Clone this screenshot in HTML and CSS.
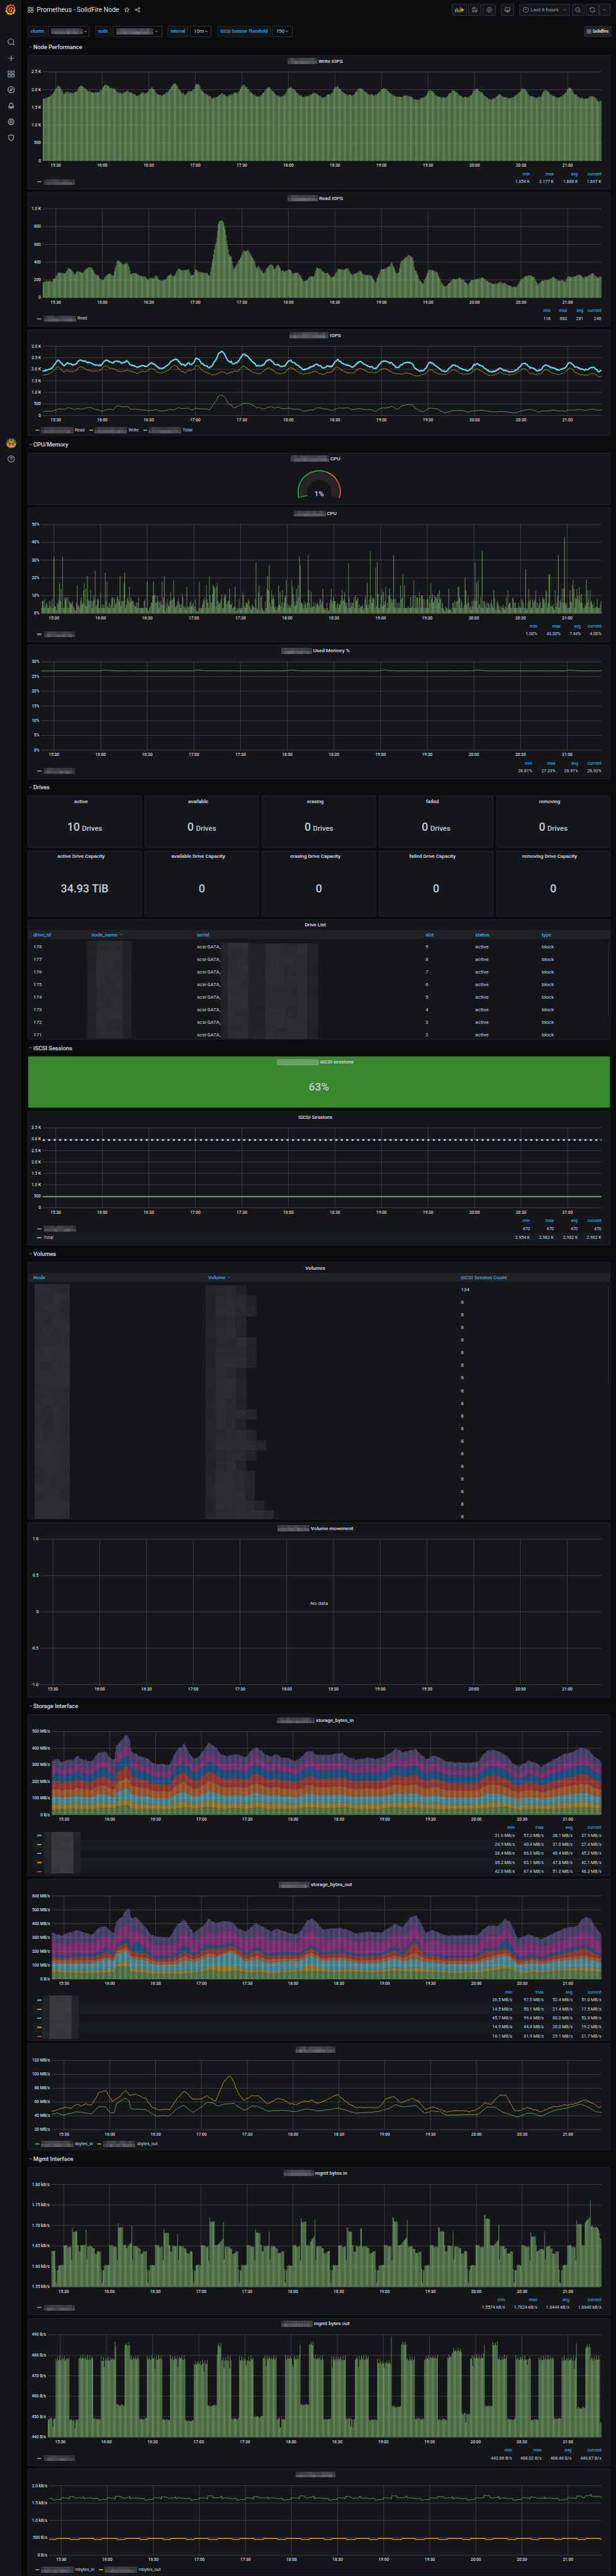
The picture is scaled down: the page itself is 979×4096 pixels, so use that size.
FILE: index.html
```html
<!DOCTYPE html>
<html lang="en">
<head>
<meta charset="utf-8">
<title>Prometheus - SolidFire Node</title>
<link rel="stylesheet" href="styles.css">
</head>
<body>
<svg class="defs" width="0" height="0">
  <defs>
    <linearGradient id="logo-fill" x1="0" y1="0" x2="0" y2="1"><stop offset="0" stop-color="#f04e2b"/><stop offset=".5" stop-color="#f58026"/><stop offset="1" stop-color="#fdca0a"/></linearGradient>
    <symbol id="i-apps" viewBox="0 0 24 24"><path d="M2 2h8v8H2zM14 2h8v8h-8zM2 14h8v8H2zM14 14h8v8h-8z"/></symbol>
    <symbol id="i-star" viewBox="0 0 24 24"><path d="M12 2.5l2.9 6.2 6.7.8-5 4.6 1.400 6.700-6-3.400-6 3.400 1.400-6.700-5-4.600 6.700-.8z"/></symbol>
    <symbol id="i-share" viewBox="0 0 24 24"><circle cx="5" cy="12" r="3"/><circle cx="18.500" cy="5.500" r="3"/><circle cx="18.500" cy="18.500" r="3"/><path d="M7.700 10.700l8-4M7.700 13.300l8 4"/></symbol>
    <symbol id="i-search" viewBox="0 0 24 24"><circle cx="11" cy="11" r="9.500"/><path d="M17.500 17.500l5.500 5.500"/></symbol>
    <symbol id="i-zoomout" viewBox="0 0 24 24"><circle cx="11" cy="11" r="9"/><path d="M17.500 17.500l5 5M7 11h8"/></symbol>
    <symbol id="i-plus" viewBox="0 0 24 24"><path d="M12 3v18M3 12h18"/></symbol>
    <symbol id="i-compass" viewBox="0 0 24 24"><circle cx="12" cy="12" r="10.500"/><path d="M16 8l-2 6-6 2 2-6zM12 1.500v2.500M12 20v2.500M1.500 12h2.500M20 12h2.500"/></symbol>
    <symbol id="i-bell" viewBox="0 0 24 24"><path d="M12 1v3M6 16v-6a6 6 0 0 1 12 0v6M4 16h16v3.500H4zM9.500 20a2.600 2.600 0 0 0 5 0"/></symbol>
    <symbol id="i-gear" viewBox="0 0 24 24"><circle cx="12" cy="12" r="3.500"/><path d="M10 2h4l.7 2.600 2.300-1.200 3 3-1.300 2.300 2.500.8v5l-2.500.8 1.300 2.300-3 3-2.300-1.200L14 22h-4l-.7-2.600L7 20.600l-3-3 1.300-2.300-2.500-.8v-5l2.500-.8L4 6.400l3-3 2.300 1.200z"/></symbol>
    <symbol id="i-shield" viewBox="0 0 24 24"><path d="M4 4.500c3 .6 5.500 0 8-2 2.500 2 5 2.600 8 2V12c0 5-3.500 8.500-8 10.500C7.500 20.500 4 17 4 12z"/></symbol>
    <symbol id="i-help" viewBox="0 0 24 24"><circle cx="12" cy="12" r="10.500"/><path d="M9 9.500a3 3 0 1 1 4.500 2.500c-1 .6-1.500 1-1.500 2.200M12 16.500v1.800"/></symbol>
    <symbol id="i-save" viewBox="0 0 24 24"><path d="M3 3h12l6 6v12H3zM7.500 21v-7h9v7M8 3v4.500h6"/></symbol>
    <symbol id="i-monitor" viewBox="0 0 24 24"><path d="M2 3h20v15H2zM2 14h20M9 18v3h6v-3M8 21.500h8"/></symbol>
    <symbol id="i-clock" viewBox="0 0 24 24"><circle cx="12" cy="12" r="10.500"/><path d="M12 6v6H8"/></symbol>
    <symbol id="i-sync" viewBox="0 0 24 24"><path d="M2 3v5.500h5.500M22 21v-5.500h-5.500M2.800 8.500A10 10 0 0 1 22 11M21.200 15.500A10 10 0 0 1 2 13"/></symbol>
    <symbol id="i-down" viewBox="0 0 24 24"><path d="M4 8l8 8 8-8"/></symbol>
    <symbol id="i-bars" viewBox="0 0 24 24"><path d="M1 5h22M1 12h22M1 19h22"/></symbol>
  </defs>
</svg>

<div class="app">
  <nav class="side">
    <svg class="logo" viewBox="0 0 30 32"><path fill="url(#logo-fill)" d="M15 0l3 3.500 5.500-1L24.500 7l4.500 3-2 4.500 2.500 4.500-3.500 3.500V28l-5.500-.5L17 32l-4.500-3-5.500 1.500-1-5-6-3.500 3-5-1.500-5.500 4-3L6 4l5.500.5z"/><path class="swirl" d="M25 13c-2-5.500-8-7-12.500-4.500S6.500 18 9.500 22s8.500 4 11 .5 1-8-3-8.500-5.500 4.500-2 6"/></svg>
    <svg class="ico"><use href="#i-search"/></svg>
    <svg class="ico"><use href="#i-plus"/></svg>
    <svg class="ico"><use href="#i-apps"/></svg>
    <svg class="ico"><use href="#i-compass"/></svg>
    <svg class="ico"><use href="#i-bell"/></svg>
    <svg class="ico"><use href="#i-gear"/></svg>
    <svg class="ico"><use href="#i-shield"/></svg>
    <svg class="avatar" viewBox="0 0 28 28"><circle cx="14" cy="14" r="14" fill="#4a6b10"/><path fill="#f0806a" d="M8 3h3v6h6V3h3v9h-4v3h-4v-3H8zM2 13h5v8h3v-4h8v4h3v-8h5v7l-5 5H7l-5-5zM12 19h4v5h-4z"/></svg>
    <svg class="ico help"><use href="#i-help"/></svg>
  </nav>

  <main class="main">
    <header class="topbar">
      <svg class="ico16"><use href="#i-apps"/></svg>
      <h1 class="page-title">Prometheus - SolidFire Node</h1>
      <svg class="ico16 star"><use href="#i-star"/></svg>
      <svg class="ico16 share"><use href="#i-share"/></svg>
      <div class="tools">
        <div class="btn wide"><svg class="addpanel" viewBox="0 0 26 16"><path fill="#7b8087" d="M0 6h3.500v9H0zM4.500 3H8v12H4.500zM9 8h3.500v7H9zM13.500 1H17v14h-3.500z"/><path stroke="#141619" stroke-width="6" d="M20 3v11M14.500 8.500h11"/><path stroke="#f9a11b" stroke-width="3.400" d="M20 3.500v10M15 8.500h10"/></svg></div>
        <div class="btn"><svg class="ico16"><use href="#i-save"/></svg></div>
        <div class="btn"><svg class="ico16"><use href="#i-gear"/></svg></div>
        <div class="btn apart"><svg class="ico16"><use href="#i-monitor"/></svg></div>
        <div class="btn apart range"><svg class="ico16"><use href="#i-clock"/></svg><span>Last 6 hours</span><svg class="caret"><use href="#i-down"/></svg></div>
        <div class="btn"><svg class="ico16"><use href="#i-zoomout"/></svg></div>
        <div class="btn joined"><svg class="ico16"><use href="#i-sync"/></svg></div>
        <div class="btn joined last"><svg class="caret"><use href="#i-down"/></svg></div>
      </div>
    </header>

    <div class="vars">
      <span class="label">cluster</span><span class="value v-cluster"><i class="mosaic" data-size="88,16" data-tone="90"></i><svg class="chev"><use href="#i-down"/></svg></span>
      <span class="label l-node">node</span><span class="value v-node"><i class="mosaic" data-size="102,17" data-tone="92"></i><svg class="chev"><use href="#i-down"/></svg></span>
      <span class="label l-int">Interval</span><span class="value v-int">10m<svg class="chev"><use href="#i-down"/></svg></span>
      <span class="label l-thr">iSCSI Session Threshold</span><span class="value v-thr">750<svg class="chev"><use href="#i-down"/></svg></span>
      <span class="linkbtn"><svg class="menu"><use href="#i-bars"/></svg>Solidfire</span>
    </div>

    <div class="board" id="board"></div>
  </main>
</div>
<script src="dashboard.js"></script>
</body>
</html>
```

FILE: styles.css
```css
* { box-sizing: border-box; }
html { background: #0b0c0e; overflow: hidden; }
body {
  margin: 0;
  width: 979px;
  height: 4096px;
  overflow: hidden;
  background: #0b0c0e;
  color: #d0d8e0;
  font-family: Roboto, "Liberation Sans", sans-serif;
}
.defs { position: absolute; }
.app { zoom: 0.5739; font-size: 14px; display: flex; width: 1705.500px; height: 7136.500px; overflow: hidden; }
svg { display: block; fill: none; stroke-linejoin: round; }
.side {
  width: 60px; flex: none; background: #141619;
  display: flex; flex-direction: column; align-items: center;
  box-shadow: 0 0 18px 3px #000; padding: 11px 0 0 2px;
}
.logo { width: 30px; height: 32px; margin: 0 4px 64px 0; flex: none; }
.swirl { stroke: #141619; stroke-width: 3; }
.ico { width: 20px; height: 20px; margin-bottom: 24px; stroke: #9fa7b3; stroke-width: 2.400; flex: none; }
.avatar { width: 28px; height: 28px; margin-top: 800px; flex: none; }
.help { margin: 19px 0 0; }
.main { width: 1645.500px; flex: none; padding: 0 12px 0 16.500px; }
.topbar { height: 53px; padding-top: 11px; display: flex; margin-bottom: 18px; margin-right: 3.500px; align-items: flex-start; }
.topbar > svg { margin-top: 9px; }
.ico16 { width: 16px; height: 16px; stroke: #c7d0d9; stroke-width: 2.400; flex: none; }
.page-title { font-size: 18px; font-weight: 400; color: #e0e1e2; margin: 5px 0 0 9px; line-height: 23px; width: 228px; white-space: nowrap; }
.star { margin-left: 14px; }
.share { margin-left: 14px; }
.tools { margin-left: auto; display: flex; gap: 4px; color: #858a91; font-weight: 500; }
.btn { width: 36px; height: 32px; background: #141619; border: 1px solid #2c3235; border-radius: 2px; display: flex; align-items: center; justify-content: center; }
.btn .ico16, .btn .caret { stroke: #858a91; }
.btn.wide { width: 42px; }
.btn.apart { margin-left: 10px; }
.btn.range { width: 142px; justify-content: flex-start; padding-left: 9px; gap: 6px; }
.btn.range .caret { margin-left: auto; margin-right: 7px; }
.btn.last { width: 32px; margin-left: -5px; }
.addpanel { width: 26px; height: 16px; }
.caret { width: 12px; height: 12px; stroke-width: 3; }
.vars { display: flex; height: 32px; align-items: stretch; font-size: 12px; font-weight: 500; white-space: nowrap; }
.label { background: #141619; border: 1px solid #202226; border-radius: 2px; color: #33a2e5; display: flex; align-items: center; justify-content: center; width: 54.500px; margin-right: 4px; }
.value { border: 1px solid #2c3235; border-radius: 2px; display: flex; align-items: center; font-size: 14px; font-weight: 400; gap: 2px; }
.v-cluster { width: 112.500px; padding-left: 5px; margin-right: 15.500px; }
.l-node { width: 45px; } .v-node { width: 137px; padding-left: 9px; margin-right: 15px; gap: 4px; }
.l-int { width: 58px; } .v-int { width: 60.500px; padding-left: 9px; margin-right: 14.500px; }
.l-thr { width: 150px; } .v-thr { width: 55px; padding-left: 8px; }
.chev { width: 10px; height: 10px; stroke: #c7d0d9; stroke-width: 3.500; flex: none; }
.linkbtn { margin-left: auto; background: #202226; border-radius: 3px; width: 77px; display: flex; align-items: center; justify-content: center; color: #e0e1e2; gap: 2px; }
.menu { width: 14px; height: 14px; stroke: #d8d9da; stroke-width: 2.500; }
.board { display: flex; flex-direction: column; gap: 8.250px; padding-top: 11.700px; width: 1613.500px; }
.row-title { height: 30px; flex: none; display: flex; align-items: center; gap: 4px; padding-left: 3px; font-size: 16px; font-weight: 500; }
.row-title .chev { width: 9px; height: 9px; }
.panel { flex: none; background: #141619; border: 1px solid #202226; border-radius: 3px; overflow: hidden; }
.title { height: 29px; display: flex; align-items: center; justify-content: center; padding-right: 20px; font-size: 14px; font-weight: 500; white-space: pre; gap: 3px; }
.row-title, .title, .thead, .label, .linkbtn { -webkit-text-stroke: .2px currentColor; }
.chart { width: 100%; overflow: visible; font-size: 11.400px; }
.chart text { fill: #d3dae1; stroke: none; font-weight: 500; }
.chart .nodata { font-size: 14px; font-weight: 400; }
.legend { padding: 0 13px; }
.lrow { display: flex; height: 25px; align-items: center; font-size: 12px; padding-left: 12px; }
.lrow.alt { background: #191c1f; }
.lrow.head { height: 18.500px; color: #33a2e5; font-weight: 500; }
.lrow .name { display: flex; align-items: center; margin-right: auto; gap: 7px; }
.lrow .cell { text-align: right; white-space: nowrap; }
.lrow .cell:last-child { margin-right: 10px; }
.dash { width: 11px; height: 4px; border-radius: 1px; opacity: .75; flex: none; }
.legend-wrap { position: relative; }
.cover { position: absolute; z-index: 1; }
.llist { display: flex; align-items: center; height: 26px; padding-left: 20px; font-size: 12px; }
.llist span { display: flex; align-items: center; gap: 4px; margin-right: 13px; }
.stats { display: grid; grid-template-columns: repeat(5, 1fr); column-gap: 8.500px; flex: none; }
.stat { display: flex; flex-direction: column; }
.big { flex: 1; display: flex; align-items: baseline; justify-content: center; font-size: 31px; font-weight: 500; gap: 6px; line-height: 36px; color: #c7d0d9; }
.big small { font-size: 20px; font-weight: 500; }
.count .big { padding-top: 39px; }
.cap .big { padding-top: 57px; }
.green { background: #37872d; }
.green .big { padding-top: 37px; font-size: 30px; }
.thead { display: grid; background: #202226; height: 24px; align-items: center; color: #33a2e5; font-weight: 500; padding-left: 14px; }
.thead span { display: flex; align-items: center; gap: 6px; }
.thead .chev { stroke: #33a2e5; }
.tbody { position: relative; padding-top: 4px; }
.trow { display: grid; height: 35px; align-items: center; padding-left: 14px; }
.drive .thead, .drive .trow { grid-template-columns: 161px 292px 633px 138px 184px 1fr; }
.vol .thead, .vol .trow { grid-template-columns: 484px 700px 1fr; }
.scroll { position: absolute; top: 6px; right: 1px; width: 6px; background: #464650; border: 1px solid #000; }
```

FILE: dashboard.js
```js
const LEFT = 77.5;          // page x of a panel's inner edge
const UNIT = 1706 / 1568;   // series x units to page pixels
const N = 720;              // half-minute samples over six hours
const COLORS = ['#7eb26d', '#eab839', '#6ed0e0', '#ef843c', '#e24d42', '#1f78c1', '#ba43a9', '#705da0'];
const TIMES = ['15:30', '16:00', '16:30', '17:00', '17:30', '18:00', '18:30', '19:00', '19:30', '20:00', '20:30', '21:00'];
let seed = 11;
const rnd = () => (seed = (seed * 16807) % 2147483647) / 2147483647;

// "x:value x:value ..." resampled to one point per half minute
function series(txt, noise = 0) {
  const p = txt.trim().split(/\s+/).map(s => s.split(':').map(Number));
  const x0 = p[0][0], x1 = 1530, out = [];
  let k = 0;
  for (let i = 0; i <= N; i++) {
    const x = x0 + (x1 - x0) * i / N;
    while (k < p.length - 2 && p[k + 1][0] <= x) k++;
    const [a, va] = p[k], [b, vb] = p[k + 1];
    out.push(va + (vb - va) * (x - a) / (b - a) + (rnd() - .5) * 2 * noise);
  }
  return out;
}

const write = series('108:1760 118:1770 130:1860 137:1950 141:2060 147:2110 152:2060 158:1940 163:1880 167:1950 180:1900 192:1930 198:2040 206:2110 212:2070 220:1970 237:1900 250:1940 258:2000 263:2120 269:2165 274:2100 280:2030 290:2020 300:1910 310:1890 324:1970 335:1890 350:1840 362:1920 370:1890 377:1980 385:2070 392:1980 398:1880 412:1840 424:1920 434:2060 441:2175 447:2160 453:2040 460:1920 470:1850 480:1960 488:1950 494:2060 500:2170 505:2140 512:1980 520:1890 530:1830 538:1760 550:1780 562:1900 577:1800 590:1880 605:1930 612:2050 618:2150 625:2090 632:1980 645:1850 656:1800 668:1890 676:2010 682:2060 690:2000 700:1860 712:1800 725:1860 732:2010 739:2080 748:2010 755:1900 770:1800 785:1830 800:1930 810:1830 820:1780 832:1850 845:1900 851:2040 858:2100 866:2010 875:1880 890:1840 900:1850 910:2000 917:2060 925:1970 935:1880 950:1850 962:1880 970:2010 977:2050 985:1990 995:1880 1010:1790 1022:1780 1035:1860 1048:1770 1062:1700 1075:1770 1085:1840 1092:2000 1100:1960 1110:1830 1122:1790 1135:1760 1145:1900 1153:1990 1162:1930 1170:1820 1187:1780 1200:1850 1206:1990 1214:2020 1222:1960 1235:1800 1248:1720 1260:1770 1272:1870 1285:1780 1298:1750 1312:1820 1323:1940 1330:2040 1338:1990 1348:1830 1365:1760 1378:1830 1385:1970 1391:1990 1400:1880 1415:1790 1425:1780 1440:1910 1446:2030 1453:2050 1462:1880 1475:1770 1495:1750 1507:1830 1517:1760 1524:1670 1530:1700', 24);
const read = series('108:170 115:190 130:182 138:220 148:290 155:275 163:270 172:340 180:315 188:260 196:300 208:280 220:335 232:340 240:270 248:250 255:200 262:200 270:260 278:270 287:240 292:340 296:415 301:415 310:370 322:395 328:330 331:260 337:285 350:260 362:230 368:240 374:200 384:230 390:215 397:255 403:205 415:190 425:235 432:265 442:240 452:340 460:305 468:310 480:320 485:250 491:250 495:325 503:295 515:285 528:270 532:240 538:370 545:560 551:680 555:850 562:880 568:850 573:740 578:590 583:470 588:470 593:320 602:380 612:460 618:530 626:520 631:545 638:480 648:400 652:320 656:360 664:310 670:270 678:330 690:390 697:320 707:380 714:310 725:290 735:325 745:270 757:285 765:240 770:190 780:195 787:240 798:240 805:340 815:330 825:275 833:280 842:230 850:240 860:330 868:310 878:320 885:335 895:250 905:280 915:300 925:260 935:255 945:250 955:170 962:250 970:320 980:325 990:350 996:405 1003:330 1008:270 1014:280 1020:410 1030:445 1040:480 1051:450 1055:320 1063:260 1068:190 1076:155 1085:250 1092:320 1100:310 1112:290 1120:200 1130:125 1140:150 1152:205 1168:220 1180:200 1190:150 1202:200 1215:215 1228:225 1240:185 1255:155 1272:170 1285:160 1300:125 1315:120 1325:200 1335:240 1348:250 1360:230 1370:145 1378:190 1395:200 1408:235 1420:195 1433:200 1438:170 1445:240 1460:235 1475:260 1485:225 1497:245 1507:280 1522:225 1530:245', 8);
const total = write.map((v, i) => v + read[i]);

let drift = 5;
const cpu = Array.from({ length: N + 1 }, () => {
  drift += (rnd() - .5) * 5 + (5.6 - drift) * .25;
  const r = rnd();
  return Math.round(Math.max(1, r < .2 ? 3 : r > .93 ? drift + 6 : drift + rnd() * 3 - 1));
});
'135:32 157:32 149:17 195:16 212:17 221:21 240:24 266:23 270:18 305:21 315:23 313:17 327:15 373:18 389:18 410:18 416:21 440:19 474:15 507:18 523:16 531:21 551:17 541:16 543:15 546:14 549:15 584:14 598:15 617:12 650:29 656:12 658:16 680:21 678:14 682:13 684:27 691:13 708:16 713:12 727:19 741:19 743:15 753:14 757:16 761:32 763:27 783:33 792:12 820:14 842:14 871:13 886:28 934:17 941:35 955:26 959:29 972:14 976:12 982:15 1001:33 1025:22 1029:16 1020:16 1052:19 1097:17 1141:14 1183:20 1186:13 1210:29 1213:17 1218:19 1227:35 1256:13 1292:13 1337:25 1345:14 1397:22 1399:22 1413:13 1421:33 1436:43 1434:14 1430:14 1456:16 1459:19 1475:15 1492:19 1503:13'
  .split(' ').forEach(s => { const [x, v] = s.split(':').map(Number); cpu[Math.round((x - 104) / 1426 * N)] = v; });

const mem = cpu.map((_, i) => {
  const x = 104 + 1426 * i / N, d = (x - 252 + 237) % 237;
  return 26.9 + (d < 14 ? .3 * d / 14 : d < 38 ? .3 * (38 - d) / 24 : 0) + (rnd() - .5) * .07;
});

const inTotal = series('131:325 145:335 155:315 170:330 185:330 195:355 205:335 232:320 242:355 252:375 268:380 278:340 290:330 294:415 305:440 312:460 318:480 324:475 329:450 332:375 345:365 355:350 370:345 385:315 400:305 430:300 440:350 450:395 460:405 468:430 475:390 485:360 492:335 505:350 515:380 523:410 530:435 540:420 550:400 560:365 575:352 600:365 625:345 635:380 650:405 665:385 675:360 690:350 702:365 715:345 735:340 750:322 765:345 778:380 790:385 805:360 830:360 850:365 870:370 885:350 905:330 935:345 955:335 975:345 995:375 1007:400 1015:390 1025:375 1040:385 1057:400 1070:365 1085:335 1100:355 1115:350 1135:320 1160:315 1200:312 1218:320 1230:365 1245:390 1265:385 1290:355 1305:310 1320:290 1345:325 1365:310 1378:290 1395:315 1415:340 1435:365 1460:380 1480:405 1500:390 1512:350 1530:322', 4);
const inGreen = series('131:34 190:37 235:34 255:39 290:37 296:52 325:57 332:38 360:34 430:33 468:44 495:36 530:45 570:36 600:40 625:36 655:42 680:36 750:34 785:43 830:38 875:43 905:36 965:36 1007:44 1030:39 1060:43 1085:37 1150:33 1218:37 1250:42 1285:48 1320:31 1350:37 1378:33 1440:38 1480:44 1530:38', .7);
const inStack = [inGreen].concat([.195, .33, .465, .61, .745, .86, 1].map(f => inTotal.map(v => v * f)));

const outStack = [
  ['131:55 165:46 250:46 290:52 295:90 325:97 332:52 370:48 400:37 460:40 510:52 535:67 570:50 600:62 630:47 660:52 690:41 740:52 790:60 850:50 880:55 950:48 1005:60 1045:53 1110:52 1150:44 1215:48 1255:62 1290:80 1325:40 1355:52 1380:47 1420:60 1485:60 1530:52', 1],
  ['131:72 165:63 235:60 290:70 296:112 320:128 332:78 370:72 395:55 460:60 505:63 535:95 590:97 630:66 660:72 690:55 765:72 785:112 815:80 840:68 880:75 960:63 1005:85 1035:72 1060:85 1110:65 1150:60 1215:65 1255:88 1290:102 1325:55 1360:70 1380:60 1420:75 1490:88 1530:70', 1],
  ['131:120 160:115 230:115 270:148 288:132 294:185 322:203 333:150 365:140 395:105 440:108 468:135 492:125 530:165 545:155 565:180 590:197 625:130 655:145 680:118 720:128 760:132 790:172 820:135 870:142 910:118 965:120 1005:150 1025:130 1055:150 1080:128 1135:112 1210:113 1255:150 1290:172 1320:103 1355:120 1380:110 1420:132 1490:152 1530:120', 2],
  ['131:138 190:140 235:137 270:160 288:148 294:205 322:232 333:168 370:155 395:125 440:127 468:168 492:142 530:190 550:175 590:210 625:148 655:170 680:142 720:148 760:150 790:195 820:152 870:160 910:135 965:140 1005:172 1025:152 1055:195 1080:150 1135:130 1210:132 1255:170 1290:190 1320:118 1355:140 1380:127 1420:150 1490:172 1530:145', 2],
  ['131:162 165:152 190:165 235:160 270:200 288:170 294:232 322:265 333:195 370:190 395:143 440:155 468:200 492:168 530:228 550:215 590:245 625:175 655:208 680:168 720:175 760:172 790:225 820:175 870:190 910:165 965:170 1005:205 1025:168 1055:278 1080:170 1105:165 1135:150 1210:160 1235:200 1255:205 1290:225 1320:140 1355:158 1380:145 1420:180 1460:200 1485:230 1530:165', 3],
  ['131:182 165:170 190:185 235:180 270:225 288:192 294:245 322:298 333:240 347:270 375:205 395:165 440:170 468:245 492:188 530:252 550:235 590:262 625:192 655:232 680:185 720:200 760:190 790:243 820:198 870:212 910:180 965:185 1005:232 1025:198 1055:302 1080:185 1135:165 1210:172 1235:222 1265:225 1290:292 1320:155 1355:180 1380:160 1420:198 1490:248 1530:180', 3],
  ['131:272 165:252 195:278 235:262 255:305 270:312 288:275 294:345 322:405 333:335 347:360 380:275 395:245 440:245 468:340 492:278 515:305 530:345 550:325 570:350 590:352 625:278 655:330 680:285 720:290 755:265 790:362 820:285 870:305 910:268 940:282 970:270 1005:325 1025:305 1055:390 1080:270 1110:285 1135:255 1215:252 1235:315 1265:312 1290:375 1320:235 1350:265 1380:235 1420:275 1450:300 1490:348 1530:270', 3],
  ['131:335 155:315 170:330 195:355 232:320 252:375 268:380 288:330 294:415 310:450 318:495 325:510 329:505 332:435 345:450 370:370 385:315 400:305 430:300 450:395 468:430 492:335 515:380 530:435 548:405 568:420 590:412 605:365 625:345 650:405 690:345 702:365 750:322 765:350 780:420 792:435 800:425 820:360 870:370 905:330 935:345 970:335 1007:400 1025:375 1043:445 1060:460 1083:335 1100:355 1135:315 1215:318 1240:385 1268:385 1284:435 1298:415 1318:290 1345:325 1378:290 1435:365 1470:385 1480:430 1492:450 1503:440 1515:380 1530:330', 4]
].map(([t, n]) => series(t, n));

const sIn = series('131:42 145:44 160:41 195:46 232:43 250:53 268:53 280:44 290:44 295:57 305:61 318:66 328:62 332:50 370:49 395:40 430:40 450:51 467:55 490:45 510:52 528:60 545:58 552:54 570:57 595:58 608:52 622:48 640:54 655:54 680:47 720:48 750:46 780:50 810:47 860:51 905:44 960:46 990:51 1005:56 1025:53 1058:55 1080:44 1100:47 1120:46 1135:41 1215:42 1240:53 1260:52 1280:45 1318:38 1340:44 1360:43 1375:39 1410:48 1440:51 1478:57 1495:53 1515:46 1530:45', .4);
const sOut = series('131:46 165:52 180:51 195:57 207:54 215:57 232:55 250:73 268:77 285:61 305:68 318:77 328:70 345:71 370:65 385:53 400:49 432:49 450:65 468:76 490:64 515:65 525:69 548:61 568:88 584:99 595:88 605:73 620:62 640:69 657:69 680:57 705:65 720:64 735:58 755:56 770:61 795:62 808:58 830:63 858:71 885:58 905:52 965:52 980:64 1000:68 1020:59 1048:65 1065:61 1082:49 1100:53 1135:46 1170:48 1195:46 1215:50 1235:59 1248:56 1270:70 1287:70 1308:48 1320:47 1340:52 1375:46 1400:52 1430:55 1460:57 1490:63 1510:57 1525:52 1530:54', .8);

// Management traffic in: a half-hourly cycle [plateau, spike, shoulder]
const CYCLE = [[1.685, 1.69, 1.652], [1.696, 1.7, 1.66], [1.682, 1.68, 1.65], [1.71, 1.708, 1.668], [1.682, 1.685, 1.65], [1.708, 1.715, 1.674], [1.685, 1.693, 1.65], [1.71, 1.713, 1.67], [1.685, 1.686, 1.65], [1.716, 1.702, 1.665], [1.673, 1.685, 1.642], [1.703, 1.762, 1.72]];
const mgmtIn = Array.from({ length: N + 1 }, (_, i) => {
  const x = 130.5 + 1399.5 * i / N, n = Math.floor((x - 160) / 116.7), r = (x - 160) - n * 116.7;
  const [a, b, c] = CYCLE[Math.max(0, n)], j = (rnd() - .5) * .003;
  if (n === 11 && r > 61) return 1.697 - (r > 78 ? (r - 78) * .004 : 0) + j * 2;
  if (r < 20.5) return (r < 10 ? 1.652 : 1.648) + j;
  if (r < 22.3) return 1.615;
  if (r < 24.5) return a + .01;
  if (r < 36) return a + j;
  if (r < 39) return 1.652;
  if (r < 44) return (c > 1.655 ? 1.652 : 1.637) + j;
  if (r < 57.5) return c - (c > 1.655 ? (57 - r) * .0012 : 0) + j;
  if (r < 59.5) return b;
  if (r < 61.3) return 1.617;
  if (r < 80) return 1.649 - (r > 74 ? .005 : 0) + j;
  if (r < 87) return 1.632 + j;
  if (r < 95) return 1.637 + j;
  if (r < 98) return 1.593;
  if (r < 100) return 1.560;
  if (r < 104) return 1.591;
  return 1.603 + j;
});

// Management traffic out: "last x:level" blocks
const BLOCKS = '139:449 175:478 198:448.5 235:478.500 256:449 291:478 293.5:485 315:455.700 329:485 353:478.500 373:449 411:478.300 432:448.500 470:478.500 491:448 527:476 551:455.500 563:484.500 587:478 608:449 645:478 667:450 704:478.500 725:449 761:478.500 763:485.500 785:456 798:485.500 823:478.500 843:449 880:478.200 902:449 939:478.500 960:448.500 995:476.500 997:488 1020:455 1034:485.500 1056:478 1078:449 1115:478.500 1137:448.700 1150:479 1175:482 1196:451.500 1231:479 1233:485 1254:455.300 1267:485.500 1291:478.500 1312:449 1350:478.200 1371:448.400 1409:478.300 1430:449 1466:478 1468:485.500 1490:454.500 1503:484 1528:478 1600:447'
  .split(' ').map(s => s.split(':').map(Number));
const mgmtOut = Array.from({ length: N + 1 }, (_, i) => {
  const x = 121 + 1409 * i / N, v = BLOCKS.find(b => x <= b[0])[1];
  return v + (v > 470 ? (i % 3 === 0 ? 1.3 : -.3) : 0) + (rnd() - .5) * 1.1 - (rnd() > .97 ? 4 : 0);
});

const f = n => n.toFixed(1), g = n => n.toFixed(2);
let uid = 0;

function gradient(color) {
  const id = 'g' + uid++;
  return [id, `<linearGradient id="${id}" gradientUnits="userSpaceOnUse" x1="0" x2="15.2" y1="0" y2="0" spreadMethod="repeat"><stop offset="0" stop-color="${color}" stop-opacity=".53"/><stop offset=".4" stop-color="${color}" stop-opacity=".53"/><stop offset=".62" stop-color="${color}" stop-opacity=".7"/><stop offset=".8" stop-color="${color}" stop-opacity=".68"/><stop offset="1" stop-color="${color}" stop-opacity=".53"/></linearGradient>`];
}

// c: {p: panel top, t/b: page y of top and bottom gridline, l: plot left, x0: first tick, x1: last tick, labels, min, max, bars|stack|lines}
function chart(c) {
  const top = c.p + 30, t = c.t - top, b = c.b - top, l = c.l - LEFT, r = 1664.6 - LEFT;
  const Y = v => b - (v - c.min) / (c.max - c.min) * (b - t);
  const X = i => l + (r - l) * i / N;
  let s = '';
  const n = c.labels.length - 1;
  c.labels.forEach((txt, i) => {
    const y = b - (b - t) * i / n;
    s += `<path stroke="#fff" stroke-opacity=".24" stroke-width="1.3" d="M${l} ${f(y)}H${r}"/><text x="${f(l - 5)}" y="${f(y + 3.6)}" text-anchor="end">${txt}</text>`;
  });
  TIMES.forEach((txt, i) => {
    const x = c.x0 + (c.x1 - c.x0) * i / 11 - LEFT;
    s += `<path stroke="#fff" stroke-opacity=".24" stroke-width="1.2" d="M${f(x)} ${f(t)}V${f(b)}"/><text x="${f(x)}" y="${f(b + 16.5)}" text-anchor="middle">${txt}</text>`;
  });
  const stack = c.bars ? [c.bars] : c.stack || [];
  stack.forEach((d, k) => {
    const [id, def] = gradient(COLORS[k]);
    const w = (r - l) / (N + 1);
    let path = '';
    for (let i = 0; i <= N; i++) path += `${i ? 'L' : 'M'}${g(l + w * i)} ${f(Y(d[i]))}H${g(l + w * (i + 1))}`;
    if (!k) path += `V${f(b)}H${f(l)}Z`;
    else for (let i = N; i >= 0; i--) path += `L${g(l + w * (i + 1))} ${f(Y(stack[k - 1][i]))}H${g(l + w * i)}`;
    s += def + `<path fill="url(#${id})" d="${path}"/>`;
  });
  (c.lines || []).forEach(([d, color, w]) => {
    s += `<path stroke="${color}" stroke-width="${w}" d="M${d.map((v, i) => g(X(i)) + ' ' + f(Y(v))).join('L')}"/>`;
  });
  if (c.dots) s += `<path stroke="#c3d3f7" stroke-width="4.500" stroke-dasharray="6 9" d="M${l} ${f(Y(2962))}H${r}"/>`;
  if (c.nodata) s += `<text class="nodata" x="${f(883 - LEFT)}" y="${f(4448 - top)}" text-anchor="middle">No data</text>`;
  return `<svg class="chart" style="height:${f(c.b + 27 - top)}px">${s}</svg>`;
}

const mosaic = (w, h, tone = 85) => `<i class="mosaic" data-size="${w},${h}" data-tone="${tone}"></i>`;
const title = (txt, w) => `<div class="title">${w ? mosaic(w, 17) : ''}${txt}</div>`;
const panel = (h, body, cls = '') => `<section class="panel ${cls}" style="height:${h}px">${body}</section>`;
const row = txt => `<div class="row-title"><svg class="chev"><use href="#i-down"/></svg>${txt}</div>`;

// edges: page x of the right side of each value column
function legend(edges, rows, names, cover) {
  const widths = [edges[1] - edges[0] - 2, edges[1] - edges[0], edges[2] - edges[1], 1665.7 - edges[2]];
  const cells = v => v.map((t, i) => `<span class="cell" style="width:${f(widths[i])}px">${t}</span>`).join('');
  let s = `<div class="lrow head"><span class="name"></span>${cells(['min', 'max', 'avg', 'current'])}</div>`;
  rows.forEach((r, i) => {
    const name = names ? names[i] : cover ? '' : mosaic(86, 16, 75);
    const color = rows.length === 2 && i ? '#a4c4ee' : COLORS[i];
    s += `<div class="lrow ${i % 2 ? 'alt' : ''}"><span class="name"><b class="dash" style="background:${color}"></b>${name}</span>${cells(r.split('|'))}</div>`;
  });
  return `<div class="legend legend-wrap">${cover || ''}${s}</div>`;
}
const list = items => `<div class="llist">${items.map(([t, c]) => `<span><b class="dash" style="background:${c}"></b>${mosaic(90, 17, 78)}${t}</span>`).join('')}</div>`;
// steps: filled tiles per row, for a ragged right edge
const cover = (x, y, w, h, cell, tone, steps = '') => `<i class="mosaic cover" data-size="${w},${h}" data-cell="${cell}" data-tone="${tone}" data-flat="1" data-steps="${steps}" style="left:${x}px;top:${y}px"></i>`;

function gauge() {
  const cx = 883 - LEFT, cy = 1361.5 - 1284.8;
  const pt = (r, q) => { const a = (-107.5 + 215 * q - 90) * Math.PI / 180; return `${f(cx + r * Math.cos(a))} ${f(cy + r * Math.sin(a))}`; };
  const arc = (r, a, b, color, w) => `<path stroke="${color}" stroke-width="${w}" d="M${pt(r, a)}A${r} ${r} 0 ${(b - a) * 215 > 180 ? 1 : 0} 1 ${pt(r, b)}"/>`;
  return `<svg class="chart" style="height:112px">${arc(58.300, 0, .6, '#299c46', 3.500)}${arc(58.300, .6, .755, '#e0752d', 3.500)}${arc(58.300, .755, 1, '#d44a3a', 3.500)}${arc(43.800, 0, 1, '#262628', 21)}${arc(43.800, 0, .015, '#299c46', 21)}<text x="${cx}" y="${f(cy + 11.500)}" text-anchor="middle" font-size="20">1%</text></svg>`;
}

const K = { l: 117.500, x0: 153.400, x1: 1571 }, P = { l: 113.200, x0: 148.500, x1: 1570 }, S = { l: 142.500, x0: 176.300, x1: 1572 };
const states = ['active', 'available', 'erasing', 'failed', 'removing'];
const flat = v => Array(N + 1).fill(v);
let h = '';

h += row('Node Performance');
h += panel(371.6, title('Write IOPS', 82) + chart({ ...K, p: 153.2, t: 199.3, b: 445.4, min: 0, max: 2500, labels: ['0', '500', '1.0 K', '1.5 K', '2.0 K', '2.5 K'], bars: write }) + legend([1467.7, 1534, 1600.4], ['1.654 K|2.177 K|1.888 K|1.697 K']));
h += panel(371.6, title('Read IOPS', 84) + chart({ ...K, p: 533, t: 578.8, b: 824.9, min: 0, max: 1000, labels: ['0', '200', '400', '600', '800', '1.0 K'], bars: read }) + legend([1525, 1571, 1616], ['118|882|281|246'], [`<span style="display:flex">${mosaic(90, 16, 78)}&nbsp;Read</span>`]));
h += panel(295.4, title('IOPS', 108) + chart({ ...K, p: 912.9, t: 959.4, b: 1151.4, min: 0, max: 3000, labels: ['0', '500', '1.0 K', '1.5 K', '2.0 K', '2.5 K', '3.0 K'], lines: [[read, '#7eb26d', 1.400], [write, '#d9a532', 1.400], [total, '#6ed0e0', 3.800]] }) + list([['Read', '#7eb26d'], ['Write', '#eab839'], ['Total', '#6ed0e0']]));

h += row('CPU/Memory');
h += panel(144, title('CPU', 108) + gauge());
h += panel(371.7, title('CPU', 88) + chart({ ...P, p: 1407, t: 1453.1, b: 1698.8, min: 0, max: 50, labels: ['0%', '10%', '20%', '30%', '40%', '50%'], bars: cpu }) + legend([1488, 1552.6, 1609], ['1.00%|43.00%|7.44%|4.00%']));
h += panel(371.7, title('Used Memory %', 86) + chart({ ...P, p: 1787, t: 1833.1, b: 2078.1, min: 0, max: 30, labels: ['0%', '5%', '10%', '15%', '20%', '25%', '30%'], lines: [[mem, '#73a364', 1.700]] }) + legend([1474, 1538.5, 1601.6], ['26.81%|27.23%|26.91%|26.92%']));

h += row('Drives');
h += `<div class="stats">${states.map((s, i) => panel(144, title(s) + `<div class="big">${i ? 0 : 10}<small>Drives</small></div>`, 'stat count')).join('')}</div>`;
h += `<div class="stats">${states.map((s, i) => panel(181.6, title(s + ' Drive Capacity') + `<div class="big">${i ? 0 : '34.93 TiB'}</div>`, 'stat cap')).join('')}</div>`;
let rows = '';
for (let i = 0; i < 8; i++) rows += `<div class="trow"><span>${178 - i}</span><span></span><span>scsi-SATA_</span><span>${9 - i}</span><span>active</span><span>block</span></div>`;
h += panel(333, title('Drive List') + `<div class="thead"><span>drive_id</span><span>node_name<svg class="chev"><use href="#i-down"/></svg></span><span>serial</span><span>slot</span><span>status</span><span>type</span></div><div class="tbody">${rows}${cover(164, 5, 122, 270, 26, 43)}${cover(533, 11, 95, 265, 21, 44)}${cover(625, 13, 176, 265, 28, 43)}<i class="scroll" style="height:212px"></i></div>`, 'drive');

h += row('iSCSI Sessions');
h += panel(144, `<div class="title"><i class="mosaic" data-size="116,18" data-green="1"></i>iSCSI sessions</div><div class="big">63%</div>`, 'green');
h += panel(371.6, title('iSCSI Sessions') + chart({ ...K, p: 3079, t: 3125.1, b: 3346.5, min: 0, max: 3500, labels: ['0', '500', '1.0 K', '1.5 K', '2.0 K', '2.5 K', '3.0 K', '3.5 K'], lines: [[flat(482), '#6fa05f', 3.500]], dots: true }) + legend([1467.7, 1534, 1600.4], ['470|470|470|470', '2.954 K|2.962 K|2.962 K|2.962 K'], [mosaic(90, 16, 78), 'Total']));

h += row('Volumes');
rows = '';
for (let i = 0; i < 19; i++) rows += `<div class="trow"><span></span><span></span><span>${i ? 8 : 134}</span></div>`;
h += panel(713.3, title('Volumes') + `<div class="thead"><span>Node</span><span>Volume<svg class="chev"><use href="#i-down"/></svg></span><span>iSCSI Session Count</span></div><div class="tbody">${rows}${cover(18, 7, 97, 649, 24, 43, 'all')}${cover(491, 10, 168, 514, 28, 42, '4,5,5,4,4,5,5,5,4,4,4,4,5,4,5,6,5,4')}${cover(491, 525, 189, 136, 27, 43, '5,5,5,6,7')}<i class="scroll" style="height:282px"></i></div>`, 'vol');
h += panel(485.6, title('Volume movement', 90) + chart({ l: 111, x0: 145.8, x1: 1570, p: 4218.8, t: 4265, b: 4668.1, min: -1, max: 1, labels: ['-1.0', '-0.5', '0', '0.5', '1.0'], nodata: true }));

h += row('Storage Interface');
h += panel(447.4, title('storage_bytes_in', 105) + chart({ ...S, p: 4750.9, t: 4797.2, b: 5027.5, min: 0, max: 500, labels: ['0 B/s', '100 MB/s', '200 MB/s', '300 MB/s', '400 MB/s', '500 MB/s'], stack: inStack }) + legend([1426, 1506, 1586], ['31.6 MB/s|57.0 MB/s|38.1 MB/s|37.9 MB/s', '24.9 MB/s|40.4 MB/s|31.0 MB/s|27.4 MB/s', '38.4 MB/s|66.0 MB/s|48.4 MB/s|45.2 MB/s', '38.2 MB/s|63.1 MB/s|47.8 MB/s|42.1 MB/s', '42.0 MB/s|67.4 MB/s|51.0 MB/s|46.3 MB/s'], null, cover(43, 22, 102, 115, 22, 56)));
h += panel(448, title('storage_bytes_out', 86) + chart({ ...S, p: 5206.5, t: 5253.4, b: 5483.8, min: 0, max: 600, labels: ['0 B/s', '100 MB/s', '200 MB/s', '300 MB/s', '400 MB/s', '500 MB/s', '600 MB/s'], stack: outStack }) + legend([1419, 1506, 1586], ['36.5 MB/s|97.5 MB/s|52.4 MB/s|51.0 MB/s', '14.5 MB/s|50.1 MB/s|21.4 MB/s|17.5 MB/s', '45.7 MB/s|99.4 MB/s|60.0 MB/s|53.8 MB/s', '14.9 MB/s|44.4 MB/s|20.0 MB/s|19.2 MB/s', '18.1 MB/s|81.9 MB/s|29.1 MB/s|21.7 MB/s'], null, cover(39, 18, 102, 120, 22, 56)));
h += panel(295.8, title('', 110) + chart({ ...S, p: 5662.8, t: 5709.2, b: 5900.6, min: 20, max: 120, labels: ['20 MB/s', '40 MB/s', '60 MB/s', '80 MB/s', '100 MB/s', '120 MB/s'], lines: [[sIn, '#7eb26d', 1.500], [sOut, '#d9a532', 1.500]] }) + list([['sbytes_in', '#7eb26d'], ['sbytes_out', '#eab839']]));

h += row('Mgmt Interface');
h += panel(409.4, title('mgmt bytes in', 84) + chart({ l: 141.4, x0: 175.2, x1: 1572, p: 6005, t: 6051.6, b: 6335.3, min: 1.55, max: 1.8, labels: ['1.55 kB/s', '1.60 kB/s', '1.65 kB/s', '1.70 kB/s', '1.75 kB/s', '1.80 kB/s'], bars: mgmtIn }) + legend([1399, 1488, 1577], ['1.5574 kB/s|1.7624 kB/s|1.6444 kB/s|1.6640 kB/s']));
h += panel(409.4, title('mgmt bytes out', 88) + chart({ l: 131.6, x0: 166, x1: 1572, p: 6422.6, t: 6469, b: 6752.7, min: 440, max: 490, labels: ['440 B/s', '450 B/s', '460 B/s', '470 B/s', '480 B/s', '490 B/s'], bars: mgmtOut }) + legend([1418, 1500, 1583], ['443.68 B/s|488.02 B/s|468.48 B/s|446.87 B/s']));
h += panel(296, title('', 110) + chart({ l: 134.9, x0: 168.6, x1: 1572, p: 6840.3, t: 6887, b: 7079.2, min: 0, max: 2, labels: ['0 B/s', '500 B/s', '1.0 kB/s', '1.5 kB/s', '2.0 kB/s'], lines: [[mgmtIn.map(v => v < 1.6 ? 1.59 : v), '#7eb26d', 1.400], [mgmtOut.map(v => v > 470 ? .48 : .452), '#d9a532', 2.200]] }) + list([['mbytes_in', '#7eb26d'], ['mbytes_out', '#eab839']]));

document.getElementById('board').innerHTML = h;

// Censored names are painted as coarse grey tiles
document.querySelectorAll('.mosaic').forEach(el => {
  const d = el.dataset, [w, hh] = d.size.split(',').map(Number), cell = +(d.cell || 9), tone = +(d.tone || 80);
  const steps = d.steps && d.steps !== 'all' ? d.steps.split(',').map(Number) : null;
  const cols = Math.round(w / cell), nrows = steps ? steps.length : Math.max(2, Math.round(hh / cell));
  let s = '';
  for (let y = 0; y < nrows; y++) for (let x = 0; x < cols; x++) {
    if (steps && x >= steps[y]) continue;
    const edge = x === 0 || x === cols - 1;
    let v = tone + (rnd() - .5) * (d.flat ? 5 : 22);
    if (steps) { if (x === 0 || x === steps[y] - 1) v -= 7; }
    else if (d.flat) { if (edge && !d.steps) v = 32 + rnd() * 3; }
    else v *= (edge ? .8 : 1) * (y ? 1.08 : .78);
    const c = d.green ? `rgb(${88 + v * .25 | 0},${145 + v * .25 | 0},${84 + v * .25 | 0})` : `rgb(${v | 0},${v + 2 | 0},${v + 5 | 0})`;
    s += `<rect x="${x * w / cols}" y="${y * hh / nrows}" width="${w / cols + .4}" height="${hh / nrows + .4}" fill="${c}"/>`;
  }
  el.innerHTML = `<svg width="${w}" height="${hh}">${s}</svg>`;
});
```
